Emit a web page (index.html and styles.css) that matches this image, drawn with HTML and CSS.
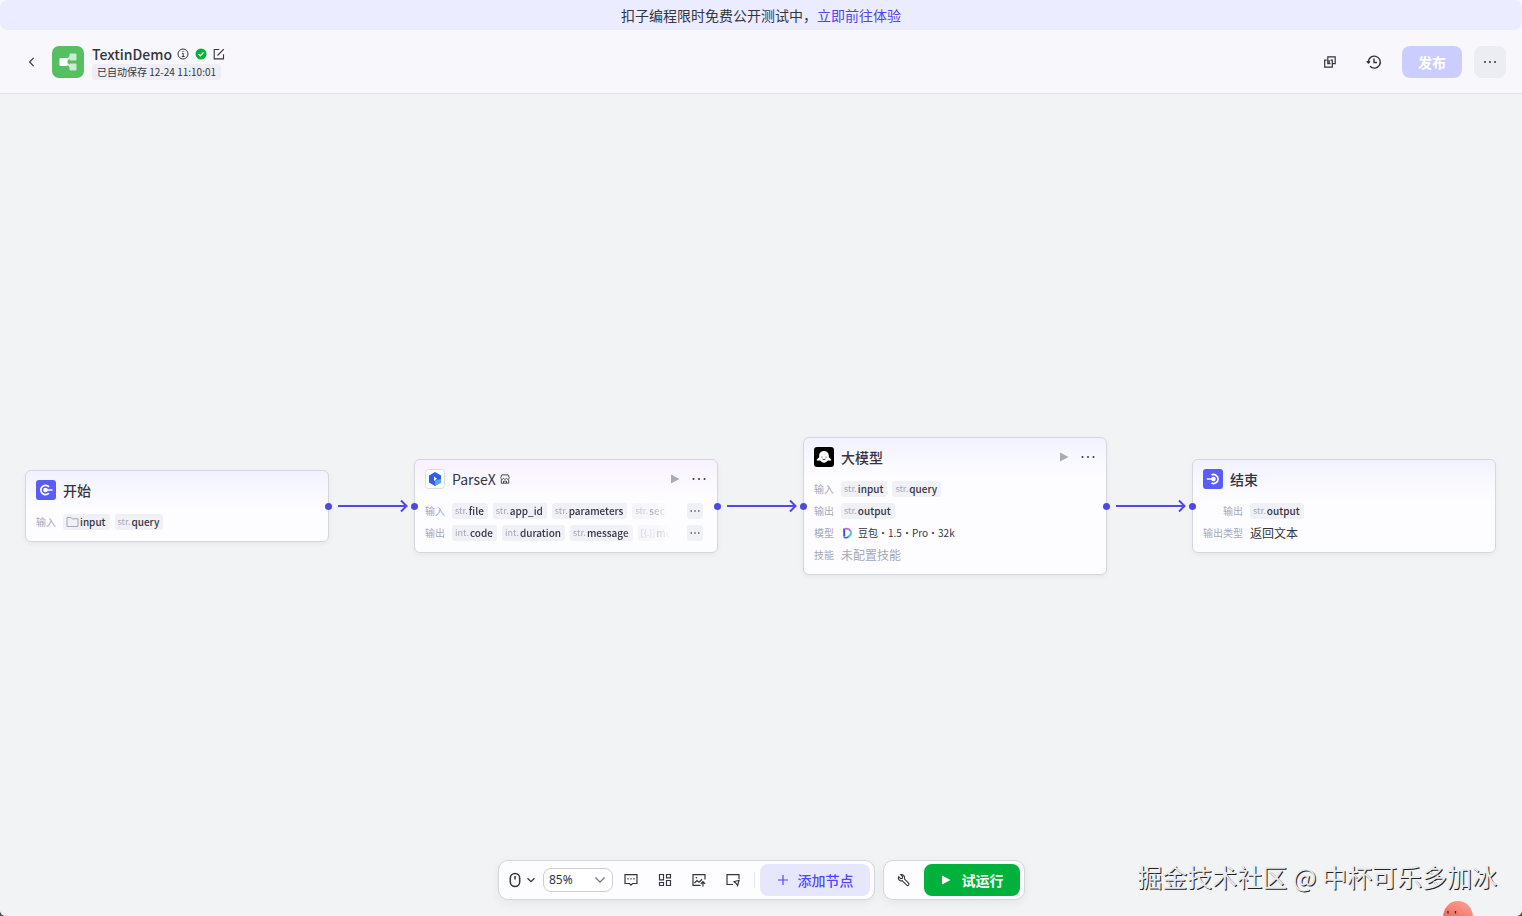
FILE: index.html
```html
<!doctype html>
<html lang="zh-CN">
<head>
    <meta charset="utf-8">
    <title>TextinDemo</title>
    <meta name="viewport" content="width=device-width, initial-scale=1" />
    <link rel="stylesheet" href="styles.css">
</head>
<body>
<div class="app">
    <div class="notice">扣子编程限时免费公开测试中，<a href="#">立即前往体验</a></div>

    <header class="header">
        <button class="back" aria-label="返回">
            <svg width="12" height="12" viewBox="0 0 12 12"><path d="M7.6 1.8 3.6 6l4 4.2" /></svg>
        </button>
        <svg class="logo" width="32" height="32" viewBox="0 0 32 32">
            <rect width="32" height="32" rx="7" fill="#56bf62" />
            <path d="M13 15.500l6-5M13 16l6 5" fill="none" stroke="#d4f2d8" stroke-width="1.800" />
            <rect x="17.500" y="7.500" width="7" height="7" rx="1" fill="#c9eecf" />
            <rect x="17.500" y="17.500" width="7" height="7" rx="1" fill="#c9eecf" />
            <rect x="7.500" y="12" width="8" height="8" rx="1" fill="#fff" />
        </svg>
        <div class="title">
            <div class="title-line">
                <h1>TextinDemo</h1>
                <svg width="12" height="12" viewBox="0 0 12 12"><circle cx="6" cy="6" r="5" stroke-width="1" /><path d="M5 5.300h1.200v3M4.800 8.500h2.800M6 3v1" stroke-width="1" /></svg>
                <svg width="12" height="12" viewBox="0 0 12 12"><circle cx="6" cy="6" r="5.500" fill="#00b23c" stroke="none" /><path d="M3.500 6.100l1.800 1.700 3.200-3.300" stroke="#fff" stroke-width="1.300" /></svg>
                <button class="edit" aria-label="编辑">
                    <svg width="12" height="12" viewBox="0 0 12 12"><path d="M6.300 1.500H1.200v9.400h9.300V6.300M4.500 7.500 10.800 1.200" stroke-width="1.100" /></svg>
                </button>
            </div>
            <span class="saved">已自动保存 12-24 11:10:01</span>
        </div>
        <div class="actions">
            <button class="icon-btn" aria-label="创建副本">
                <svg width="14" height="14" viewBox="0 0 14 14"><path d="M6.500 8.700H4.800V1.800h7.400v6.900H9.800M7.600 5.200h1.700v6.900H1.700V5.200h2M7.500 8.700H6.200V5.200" /></svg>
            </button>
            <button class="icon-btn" aria-label="历史记录">
                <svg width="16" height="16" viewBox="0 0 16 16"><path d="M2.300 8.200A6 6 0 1 1 4 12.300M.8 7.200l1.600 1.700L4 7.200M8 4.500v4h3" stroke-width="1.400" /></svg>
            </button>
            <button class="publish" disabled>发布</button>
            <button class="icon-btn more" aria-label="更多">
                <svg class="solid" width="14" height="4" viewBox="0 0 14 4"><circle cx="2" cy="2" r="1" /><circle cx="7" cy="2" r="1" /><circle cx="12" cy="2" r="1" /></svg>
            </button>
        </div>
    </header>

    <main class="canvas">
        <section class="node">
            <div class="node-head">
                <svg width="20" height="20" viewBox="0 0 20 20"><rect width="20" height="20" rx="3" fill="#5b5cf6" stroke="none" /><path d="M13 6.800A4.700 4.700 0 1 0 13 13.200" stroke="#fff" stroke-width="1.700" /><circle cx="9.500" cy="10" r="2.300" fill="#fff" stroke="none" /><path d="M9.500 10h7" stroke="#fff" stroke-width="1.500" /></svg>
                <h2>开始</h2>
            </div>
            <div class="row">
                <span class="label">输入</span>
                <div class="tags">
                    <span class="tag"><svg width="13" height="10" viewBox="0 0 13 10"><path d="M1 .5h4l1 1.300h6V9.500H1z" stroke="#a6a7b8" stroke-width="1" /></svg>input</span>
                    <span class="tag"><i>str.</i>query</span>
                </div>
            </div>
            <span class="port out"></span>
        </section>

        <svg class="edge" height="14" aria-hidden="true"><line x1="9" y1="7" x2="100%" y2="7" /></svg>

        <section class="node plugin">
            <svg class="arrow" width="12" height="14" viewBox="0 0 12 14"><path d="M1 7h9M5 1.500 10.500 7 5 12.500" /></svg>
            <div class="node-head">
                <svg width="20" height="20" viewBox="0 0 20 20"><rect x=".5" y=".5" width="19" height="19" rx="3" fill="#fff" stroke="#dcdde8" stroke-width="1" /><path d="M10 3l6 3.500v7L10 17l-6-3.500v-7z" fill="#2f5fe8" stroke="none" /><path d="M10 11.500l6-1.500v3.500L10 17z" fill="#58a5ff" stroke="none" /><path d="M9 7.500l3 2.300-3 2.300z" fill="#fff" stroke="none" /></svg>
                <h2>ParseX</h2>
                <svg width="10" height="10" viewBox="0 0 10 10"><path d="M1.800.9h6.400l1 2.700v.8c-1 1.200-2 1.200-2.800 0-.9 1.200-1.900 1.200-2.800 0-.9 1.200-1.900 1.200-2.800 0v-.8zM1.300 5.400v3.800h7.400V5.400M3.500 9V7.200h3V9" stroke-width=".9" /></svg>
                <div class="node-tools">
                    <button aria-label="运行"><svg class="play" width="10" height="10" viewBox="0 0 10 10"><path d="M1 .5l8.500 4.500L1 9.500z" /></svg></button>
                    <button aria-label="更多"><svg class="solid" width="14" height="4" viewBox="0 0 14 4"><circle cx="1.500" cy="2" r="1" /><circle cx="7" cy="2" r="1" /><circle cx="12.500" cy="2" r="1" /></svg></button>
                </div>
            </div>
            <div class="row">
                <span class="label">输入</span>
                <div class="tags fade">
                    <span class="tag"><i>str.</i>file</span>
                    <span class="tag"><i>str.</i>app_id</span>
                    <span class="tag"><i>str.</i>parameters</span>
                    <span class="tag"><i>str.</i>sec</span>
                </div>
                <button class="tag-more" aria-label="更多输入"><svg class="solid" width="10" height="4" viewBox="0 0 10 4"><circle cx="1.200" cy="2" r=".8" /><circle cx="5" cy="2" r=".8" /><circle cx="8.800" cy="2" r=".8" /></svg></button>
            </div>
            <div class="row">
                <span class="label">输出</span>
                <div class="tags fade">
                    <span class="tag"><i>int.</i>code</span>
                    <span class="tag"><i>int.</i>duration</span>
                    <span class="tag"><i>str.</i>message</span>
                    <span class="tag"><i>[{.}]</i>me</span>
                </div>
                <button class="tag-more" aria-label="更多输出"><svg class="solid" width="10" height="4" viewBox="0 0 10 4"><circle cx="1.200" cy="2" r=".8" /><circle cx="5" cy="2" r=".8" /><circle cx="8.800" cy="2" r=".8" /></svg></button>
            </div>
            <span class="port in"></span>
            <span class="port out"></span>
        </section>

        <svg class="edge" height="14" aria-hidden="true"><line x1="9" y1="7" x2="100%" y2="7" /></svg>

        <section class="node">
            <svg class="arrow" width="12" height="14" viewBox="0 0 12 14"><path d="M1 7h9M5 1.500 10.500 7 5 12.500" /></svg>
            <div class="node-head">
                <svg width="20" height="20" viewBox="0 0 20 20"><rect width="20" height="20" rx="3" fill="#000" stroke="none" /><path d="M10 4c-3 0-4.800 2.200-4.800 4.500v1.800L3 12.300c-.7.800 0 1.500 1.200 1.400.7-.1 1.300-.3 1.800-.2.700.2 1.900 2.200 4 2.200s3.300-2 4-2.200c.5-.1 1.100.1 1.800.2 1.200.1 1.900-.6 1.200-1.400l-2.200-2V8.500C14.800 6.200 13 4 10 4z" fill="#fff" stroke="none" /><path d="M7.800 9.700v.8M12.200 9.700v.8M8.600 12c.8.800 2 .8 2.800 0" stroke="#000" stroke-width=".8" /></svg>
                <h2>大模型</h2>
                <div class="node-tools">
                    <button aria-label="运行"><svg class="play" width="10" height="10" viewBox="0 0 10 10"><path d="M1 .5l8.500 4.500L1 9.500z" /></svg></button>
                    <button aria-label="更多"><svg class="solid" width="14" height="4" viewBox="0 0 14 4"><circle cx="1.500" cy="2" r="1" /><circle cx="7" cy="2" r="1" /><circle cx="12.500" cy="2" r="1" /></svg></button>
                </div>
            </div>
            <div class="row">
                <span class="label">输入</span>
                <div class="tags">
                    <span class="tag"><i>str.</i>input</span>
                    <span class="tag"><i>str.</i>query</span>
                </div>
            </div>
            <div class="row">
                <span class="label">输出</span>
                <div class="tags"><span class="tag"><i>str.</i>output</span></div>
            </div>
            <div class="row">
                <span class="label">模型</span>
                <span class="model">
                    <svg width="12" height="12" viewBox="0 0 12 12">
                        <path d="M3.200 1.500v8" stroke="#4a48f0" stroke-width="2" />
                        <path d="M3.500 1.900C6 1.300 8.600 2.200 9.600 4.300" stroke="#b46cf0" stroke-width="1.800" />
                        <path d="M9.800 4c.6 2.200-.3 4.400-2.300 5.500" stroke="#35d6cf" stroke-width="2" />
                        <path d="M2.600 10.300c1.700.6 3.700.4 5.100-.7" stroke="#2d6cf5" stroke-width="1.500" />
                    </svg>
                    豆包・1.5・Pro・32k
                </span>
            </div>
            <div class="row">
                <span class="label">技能</span>
                <span class="value empty">未配置技能</span>
            </div>
            <span class="port in"></span>
            <span class="port out"></span>
        </section>

        <svg class="edge" height="14" aria-hidden="true"><line x1="9" y1="7" x2="100%" y2="7" /></svg>

        <section class="node end">
            <svg class="arrow" width="12" height="14" viewBox="0 0 12 14"><path d="M1 7h9M5 1.500 10.500 7 5 12.500" /></svg>
            <div class="node-head">
                <svg width="20" height="20" viewBox="0 0 20 20"><rect width="20" height="20" rx="3" fill="#5b5cf6" stroke="none" /><path d="M8.500 6A4.500 4.500 0 1 1 8.500 14" stroke="#fff" stroke-width="1.700" /><circle cx="10.500" cy="10" r="2.300" fill="#fff" stroke="none" /><path d="M3.800 10h7" stroke="#fff" stroke-width="1.500" /></svg>
                <h2>结束</h2>
            </div>
            <div class="row">
                <span class="label">输出</span>
                <div class="tags"><span class="tag"><i>str.</i>output</span></div>
            </div>
            <div class="row">
                <span class="label">输出类型</span>
                <span class="value">返回文本</span>
            </div>
            <span class="port in"></span>
        </section>

        <div class="toolbar">
            <div class="bar">
                <button class="mouse" aria-label="交互模式">
                    <svg width="12" height="16" viewBox="0 0 12 16"><rect x="1.300" y="1.500" width="9.400" height="13" rx="4.700" stroke-width="1.500" /><path d="M6 4v3.500" stroke-width="1.500" /></svg>
                    <svg width="10" height="10" viewBox="0 0 10 10"><path d="M1.500 3.300 5 6.700l3.500-3.400" stroke-width="1.300" /></svg>
                </button>
                <div class="zoom">
                    <select aria-label="缩放">
                        <option>85%</option>
                        <option>100%</option>
                    </select>
                    <svg width="12" height="12" viewBox="0 0 12 12"><path d="M1.500 3.500 6 8.200l4.500-4.700" stroke="#70717d" /></svg>
                </div>
                <button class="icon-btn" aria-label="注释"><svg width="14" height="14" viewBox="0 0 14 14"><path d="M1 1.700h12v8.800H8.500L7 12.200l-1.500-1.700H1z" /><path d="M4 5.300v1.300M7 5.300v1.300M10 5.300v1.300" stroke-width="1.300" /></svg></button>
                <button class="icon-btn" aria-label="优化布局"><svg width="14" height="14" viewBox="0 0 14 14"><path d="M1.500 1.500h4v5.300h-4zM8.500 1.500h4v3.300h-4zM1.500 9.500h4v3h-4zM8.500 7.500h4v5h-4z" /></svg></button>
                <button class="icon-btn" aria-label="导出图片"><svg width="14" height="14" viewBox="0 0 14 14"><path d="M13 6.500V1.700H1v10.600h7.500M2.500 10 5 7.500l2 1.700 3-2.900M11 13.500V8.800M8.800 10.800 11 8.600l2.200 2.200" /><circle cx="4.300" cy="4.800" r=".8" fill="#34353f" stroke="none" /></svg></button>
                <button class="icon-btn" aria-label="缩略图"><svg width="14" height="14" viewBox="0 0 14 14"><path d="M13 6V1.700H1v9.800h6M8 8.800l5-1.500-1.400 5.200-1.400-2z" /></svg></button>
                <span class="divider"></span>
                <button class="add"><svg width="12" height="12" viewBox="0 0 12 12"><path d="M6 1v10M1 6h10" stroke="#5147ff" /></svg>添加节点</button>
            </div>
            <div class="bar">
                <button class="icon-btn" aria-label="调试"><svg width="14" height="14" viewBox="0 0 14 14"><path d="M3.700 1.600l1.900 1.900-.3 1.700-1.700.4-2-1.900c-.6 1.500-.2 2.700.7 3.500.8.700 1.900.9 2.900.5l4.500 4.500c1.200 1 3-.6 2-1.900L7.400 5.800c.4-1.300.1-2.500-.7-3.300-.8-.9-1.900-1.200-3-.9z" stroke-width="1.100" /></svg></button>
                <button class="run"><svg width="10" height="10" viewBox="0 0 10 10"><path d="M1 .5l8.500 4.500L1 9.500z" fill="#fff" stroke="none" /></svg>试运行</button>
            </div>
        </div>

        <div class="watermark">掘金技术社区 @ 中杯可乐多加冰</div>
        <svg class="mascot" width="30" height="15" viewBox="0 0 30 15">
            <defs>
                <linearGradient id="skin" x1="0" y1="1" x2="1" y2="0"><stop offset="0" stop-color="#ee6a64" /><stop offset="1" stop-color="#ffa695" /></linearGradient>
            </defs>
            <path d="M0 15C1 6 7 0 15 0s14 6 15 15z" fill="url(#skin)" stroke="none" />
            <path d="M5 10v2.500M12.500 10v2.500" stroke="#3a2020" stroke-width="1.300" />
        </svg>
    </main>
</div>
</body>
</html>
```

FILE: styles.css
```css
* { box-sizing: border-box; }

body {
    margin: 0;
    font: 14px/20px "Noto Sans CJK SC", sans-serif;
    color: #34353f;
    background: #38566c;
}

h1, h2 {
    margin: 0;
    font-weight: 500;
}

button {
    padding: 0;
    border: 0;
    background: transparent;
    color: inherit;
    font: inherit;
    cursor: pointer;
}

svg {
    display: block;
    flex: none;
    fill: none;
    stroke: #34353f;
    stroke-width: 1.2;
}

svg.solid {
    fill: #34353f;
    stroke: none;
}

.app {
    display: flex;
    flex-direction: column;
    min-height: 100vh;
    overflow: hidden;
    border-radius: 0 0 6px 6px;
    background: #f7f7fc;
}

.notice {
    height: 30px;
    border-radius: 8px;
    background: #ebecff;
    line-height: 30px;
    text-align: center;
}

.notice a {
    color: #5147e8;
    text-decoration: none;
}

/* header */
.header {
    display: flex;
    align-items: center;
    height: 64px;
    padding: 0 16px;
    border-bottom: 1px solid #e1e2eb;
}

.back {
    display: flex;
    align-items: center;
    justify-content: center;
    width: 32px;
    height: 32px;
}

.logo {
    margin: 0 8px 0 4px;
    stroke: none;
}

.title { padding-top: 1px; }

.title-line {
    display: flex;
    align-items: center;
    gap: 6px;
    height: 20px;
}

.title h1 {
    margin-right: -1px;
    font-size: 14px;
}

.saved {
    display: block;
    width: max-content;
    padding: 0 5px;
    border-radius: 3px;
    background: #eeeff6;
    font-size: 10px;
    line-height: 16px;
}

.actions {
    display: flex;
    gap: 12px;
    margin-left: auto;
}

.icon-btn {
    display: flex;
    align-items: center;
    justify-content: center;
    width: 32px;
    height: 32px;
    border-radius: 8px;
}

.icon-btn.more { background: #ecedf3; }

.publish {
    width: 60px;
    height: 32px;
    border-radius: 8px;
    background: #cccdff;
    color: #fff;
    font-weight: 700;
}

/* canvas */
.canvas {
    position: relative;
    display: flex;
    flex: 1;
    align-items: center;
    padding: 2px 26px 0 25px;
    background: #f2f3f5;
}

.node {
    position: relative;
    flex: none;
    display: flex;
    flex-direction: column;
    gap: 2px;
    width: 304px;
    padding: 9px 10px;
    border: 1px solid #d5d6e0;
    border-radius: 6px;
    background: linear-gradient(#f2f2ff, #fdfdff 40px, #fdfdff);
    box-shadow: 0 2px 5px rgba(0, 0, 0, .05);
}

.node.plugin { background: linear-gradient(#f8f2ff, #fdfdff 40px, #fdfdff); }

.node-head {
    display: flex;
    align-items: center;
    gap: 7px;
    height: 20px;
    margin-bottom: 10px;
}

.node-head h2 { font-size: 14px; }

.plugin h2 {
    margin-right: -3px;
    font-weight: 400;
}

.node-tools {
    display: flex;
    gap: 12px;
    margin-left: auto;
    padding-right: 1px;
}

svg.play {
    fill: #a9a9b8;
    stroke: none;
}

.node-tools button {
    display: flex;
    align-items: center;
    height: 20px;
}

.row {
    display: flex;
    align-items: center;
    gap: 7px;
    height: 20px;
}

.label {
    flex: none;
    width: 20px;
    color: #a6a7b8;
    font-size: 10px;
    text-align: right;
}

.end .label { width: 40px; }

.tags {
    display: flex;
    gap: 5px;
}

.tags.fade {
    width: 218px;
    -webkit-mask-image: linear-gradient(90deg, #000 170px, transparent);
    mask-image: linear-gradient(90deg, #000 170px, transparent);
}

.tag {
    display: flex;
    flex: none;
    align-items: center;
    gap: 1px;
    height: 16px;
    padding: 0 4px 0 3px;
    border-radius: 3px;
    background: #f0f0f7;
    font-size: 10px;
    font-weight: 500;
    line-height: 16px;
}

.tag i {
    color: #a6a7b8;
    font-size: 9px;
    font-style: normal;
    font-weight: 400;
}

.tag-more {
    display: flex;
    align-items: center;
    justify-content: center;
    width: 16px;
    height: 16px;
    margin-left: auto;
    margin-right: 4px;
    border-radius: 3px;
    background: #f0f0f7;
}

.model {
    display: flex;
    align-items: center;
    gap: 5px;
    font-size: 10px;
}

.value { font-size: 12px; }

.value.empty { color: #a6a7b8; }

.port {
    position: absolute;
    top: 50%;
    width: 7px;
    height: 7px;
    margin-top: -3px;
    border-radius: 50%;
    background: #4d48e0;
}

.port.in { left: -4px; }

.port.out { right: -4px; }

.edge {
    flex: 1;
    min-width: 0;
    padding-right: 8px;
    stroke: #5147ec;
    stroke-width: 2;
}

.arrow {
    position: absolute;
    top: 50%;
    left: -19px;
    margin-top: -7px;
    stroke: #5147ec;
    stroke-width: 2;
}

/* bottom toolbar */
.toolbar {
    position: absolute;
    right: 0;
    bottom: 16px;
    left: 0;
    display: flex;
    justify-content: center;
    gap: 8px;
    padding-left: 1px;
}

.bar {
    display: flex;
    align-items: center;
    gap: 2px;
    padding: 3px 4px;
    border: 1px solid #d5d6e0;
    border-radius: 10px;
    background: #fdfdff;
    box-shadow: 0 3px 10px rgba(0, 0, 0, .06);
}

.mouse {
    display: flex;
    align-items: center;
    justify-content: center;
    gap: 5px;
    width: 38px;
    height: 32px;
}

.zoom {
    position: relative;
    width: 70px;
}

.zoom select {
    display: block;
    width: 100%;
    height: 24px;
    padding: 0 5px;
    border: 1px solid #cdced8;
    border-radius: 8px;
    background: #fff;
    color: #34353f;
    font: 12px/20px "Noto Sans", sans-serif;
    -webkit-appearance: none;
    appearance: none;
}

.zoom svg {
    position: absolute;
    top: 6px;
    right: 7px;
    pointer-events: none;
}

.divider {
    width: 1px;
    height: 16px;
    margin: 0 3px;
    background: #e4e5ec;
}

.add, .run {
    display: flex;
    align-items: center;
    justify-content: center;
    gap: 9px;
    height: 32px;
    border-radius: 8px;
    font-weight: 500;
}

.add {
    width: 110px;
    background: #e6e7ff;
    color: #5147ff;
}

.run {
    width: 96px;
    margin-left: 2px;
    gap: 11px;
    background: #00b23c;
    color: #fff;
    font-weight: 700;
}

.watermark {
    position: absolute;
    right: 25px;
    bottom: 22px;
    color: #e9eaec;
    font-size: 25px;
    line-height: 36px;
    text-shadow: 1px 1px 0 #222;
}

.mascot {
    position: absolute;
    right: 49px;
    bottom: 0;
}
```
